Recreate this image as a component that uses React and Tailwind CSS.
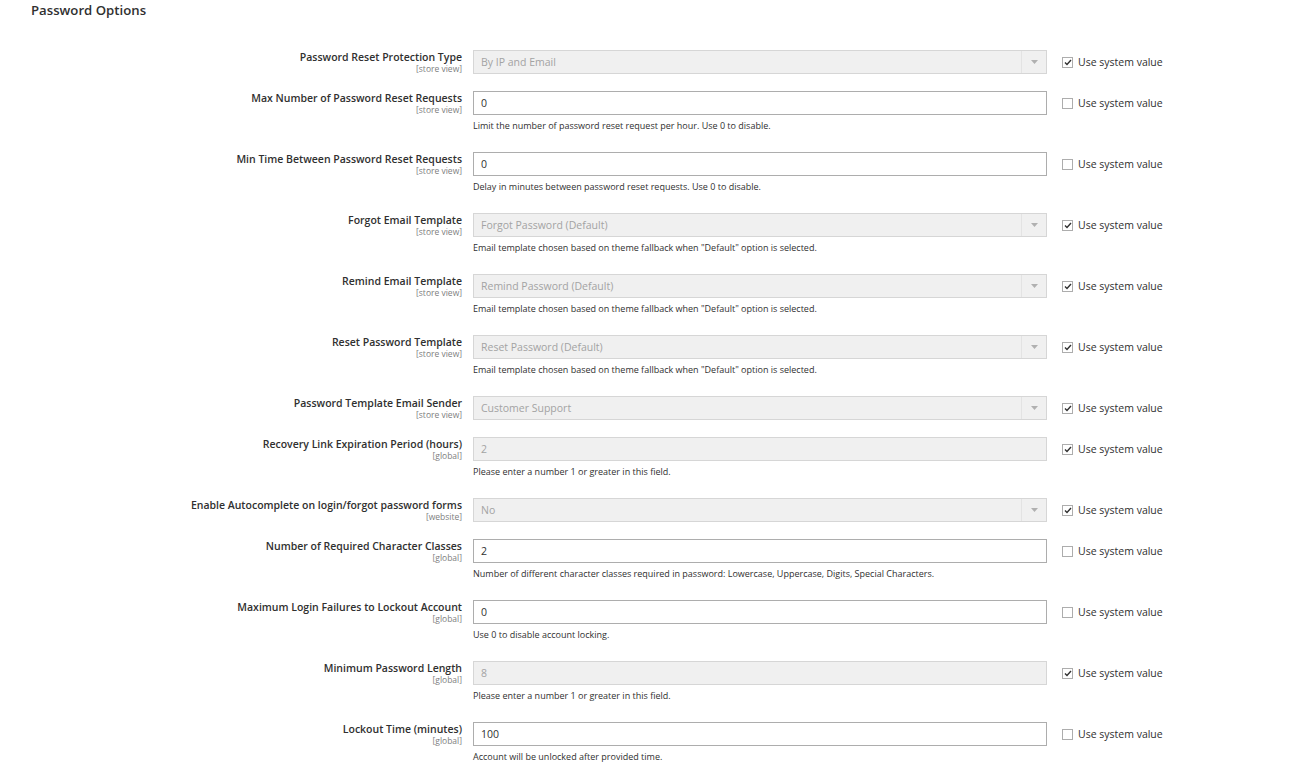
const font = { fontFamily: '"Open Sans", "Noto Sans", sans-serif' };

const rows = [
  { label: "Password Reset Protection Type", scope: "store view", type: "select", value: "By IP and Email", inherit: true },
  { label: "Max Number of Password Reset Requests", scope: "store view", type: "text", value: "0", inherit: false, note: "Limit the number of password reset request per hour. Use 0 to disable." },
  { label: "Min Time Between Password Reset Requests", scope: "store view", type: "text", value: "0", inherit: false, note: "Delay in minutes between password reset requests. Use 0 to disable." },
  { label: "Forgot Email Template", scope: "store view", type: "select", value: "Forgot Password (Default)", inherit: true, note: 'Email template chosen based on theme fallback when "Default" option is selected.' },
  { label: "Remind Email Template", scope: "store view", type: "select", value: "Remind Password (Default)", inherit: true, note: 'Email template chosen based on theme fallback when "Default" option is selected.' },
  { label: "Reset Password Template", scope: "store view", type: "select", value: "Reset Password (Default)", inherit: true, note: 'Email template chosen based on theme fallback when "Default" option is selected.' },
  { label: "Password Template Email Sender", scope: "store view", type: "select", value: "Customer Support", inherit: true },
  { label: "Recovery Link Expiration Period (hours)", scope: "global", type: "text", value: "2", inherit: true, note: "Please enter a number 1 or greater in this field." },
  { label: "Enable Autocomplete on login/forgot password forms", scope: "website", type: "select", value: "No", inherit: true },
  { label: "Number of Required Character Classes", scope: "global", type: "text", value: "2", inherit: false, note: "Number of different character classes required in password: Lowercase, Uppercase, Digits, Special Characters." },
  { label: "Maximum Login Failures to Lockout Account", scope: "global", type: "text", value: "0", inherit: false, note: "Use 0 to disable account locking." },
  { label: "Minimum Password Length", scope: "global", type: "text", value: "8", inherit: true, note: "Please enter a number 1 or greater in this field." },
  { label: "Lockout Time (minutes)", scope: "global", type: "text", value: "100", inherit: false, note: "Account will be unlocked after provided time." },
];

function Field({ row }) {
  const disabled = row.inherit;
  const box = disabled
    ? "border-[#d6d6d6] bg-[#f0f0f0] text-[#a3a3a3]"
    : "border-[#adadad] bg-white text-[#303030]";

  if (row.type === "select") {
    return (
      <div className={`flex h-[24px] items-stretch border ${box}`}>
        <div className="flex flex-1 items-center pl-[7px] pt-[1px] text-[10.5px]">{row.value}</div>
        <div className="flex w-[25px] items-center justify-center border-l border-[#e3e3e3]">
          <svg width="7" height="4" viewBox="0 0 7 4">
            <path d="M0 0h7L3.5 4z" fill="#b0b0b0" />
          </svg>
        </div>
      </div>
    );
  }

  return (
    <div className={`flex h-[24px] items-center border pl-[7px] pt-[1px] text-[10.5px] ${box}`}>
      {row.value}
    </div>
  );
}

function Checkbox({ checked }) {
  return (
    <div className="flex items-center gap-[5px]">
      <span className="flex h-[11px] w-[11px] items-center justify-center border border-[#adadad] bg-white">
        {checked && (
          <svg width="8" height="7" viewBox="0 0 8 7">
            <path d="M1 3.5l2 2L7 1" fill="none" stroke="#303030" strokeWidth="1.4" />
          </svg>
        )}
      </span>
      <span className="text-[10.5px] text-[#303030]">Use system value</span>
    </div>
  );
}

export default function App() {
  return (
    <div className="min-h-[774px] w-[1313px] bg-white" style={font}>
      <h2 className="pl-[31px] text-[13.2px] leading-[20px] font-semibold text-[#303030]">
        Password Options
      </h2>

      <div className="pt-[30px]">
        {rows.map((row) => (
          <div key={row.label} className="mb-[17px] flex items-start">
            <div className="w-[473px] shrink-0 pr-[11px] pt-[1px] text-right">
              <div className="text-[10.5px] leading-[13px] font-semibold text-[#303030]">{row.label}</div>
              <div className="text-[8.5px] leading-[9px] text-[#808080]">[{row.scope}]</div>
            </div>
            <div className="w-[574px] shrink-0">
              <Field row={row} />
              {row.note && (
                <div className="pt-[4px] pb-[2px] text-[9px] leading-[14px] text-[#303030]">{row.note}</div>
              )}
            </div>
            <div className="pl-[15px] pt-[5px]">
              <Checkbox checked={row.inherit} />
            </div>
          </div>
        ))}
      </div>
    </div>
  );
}
